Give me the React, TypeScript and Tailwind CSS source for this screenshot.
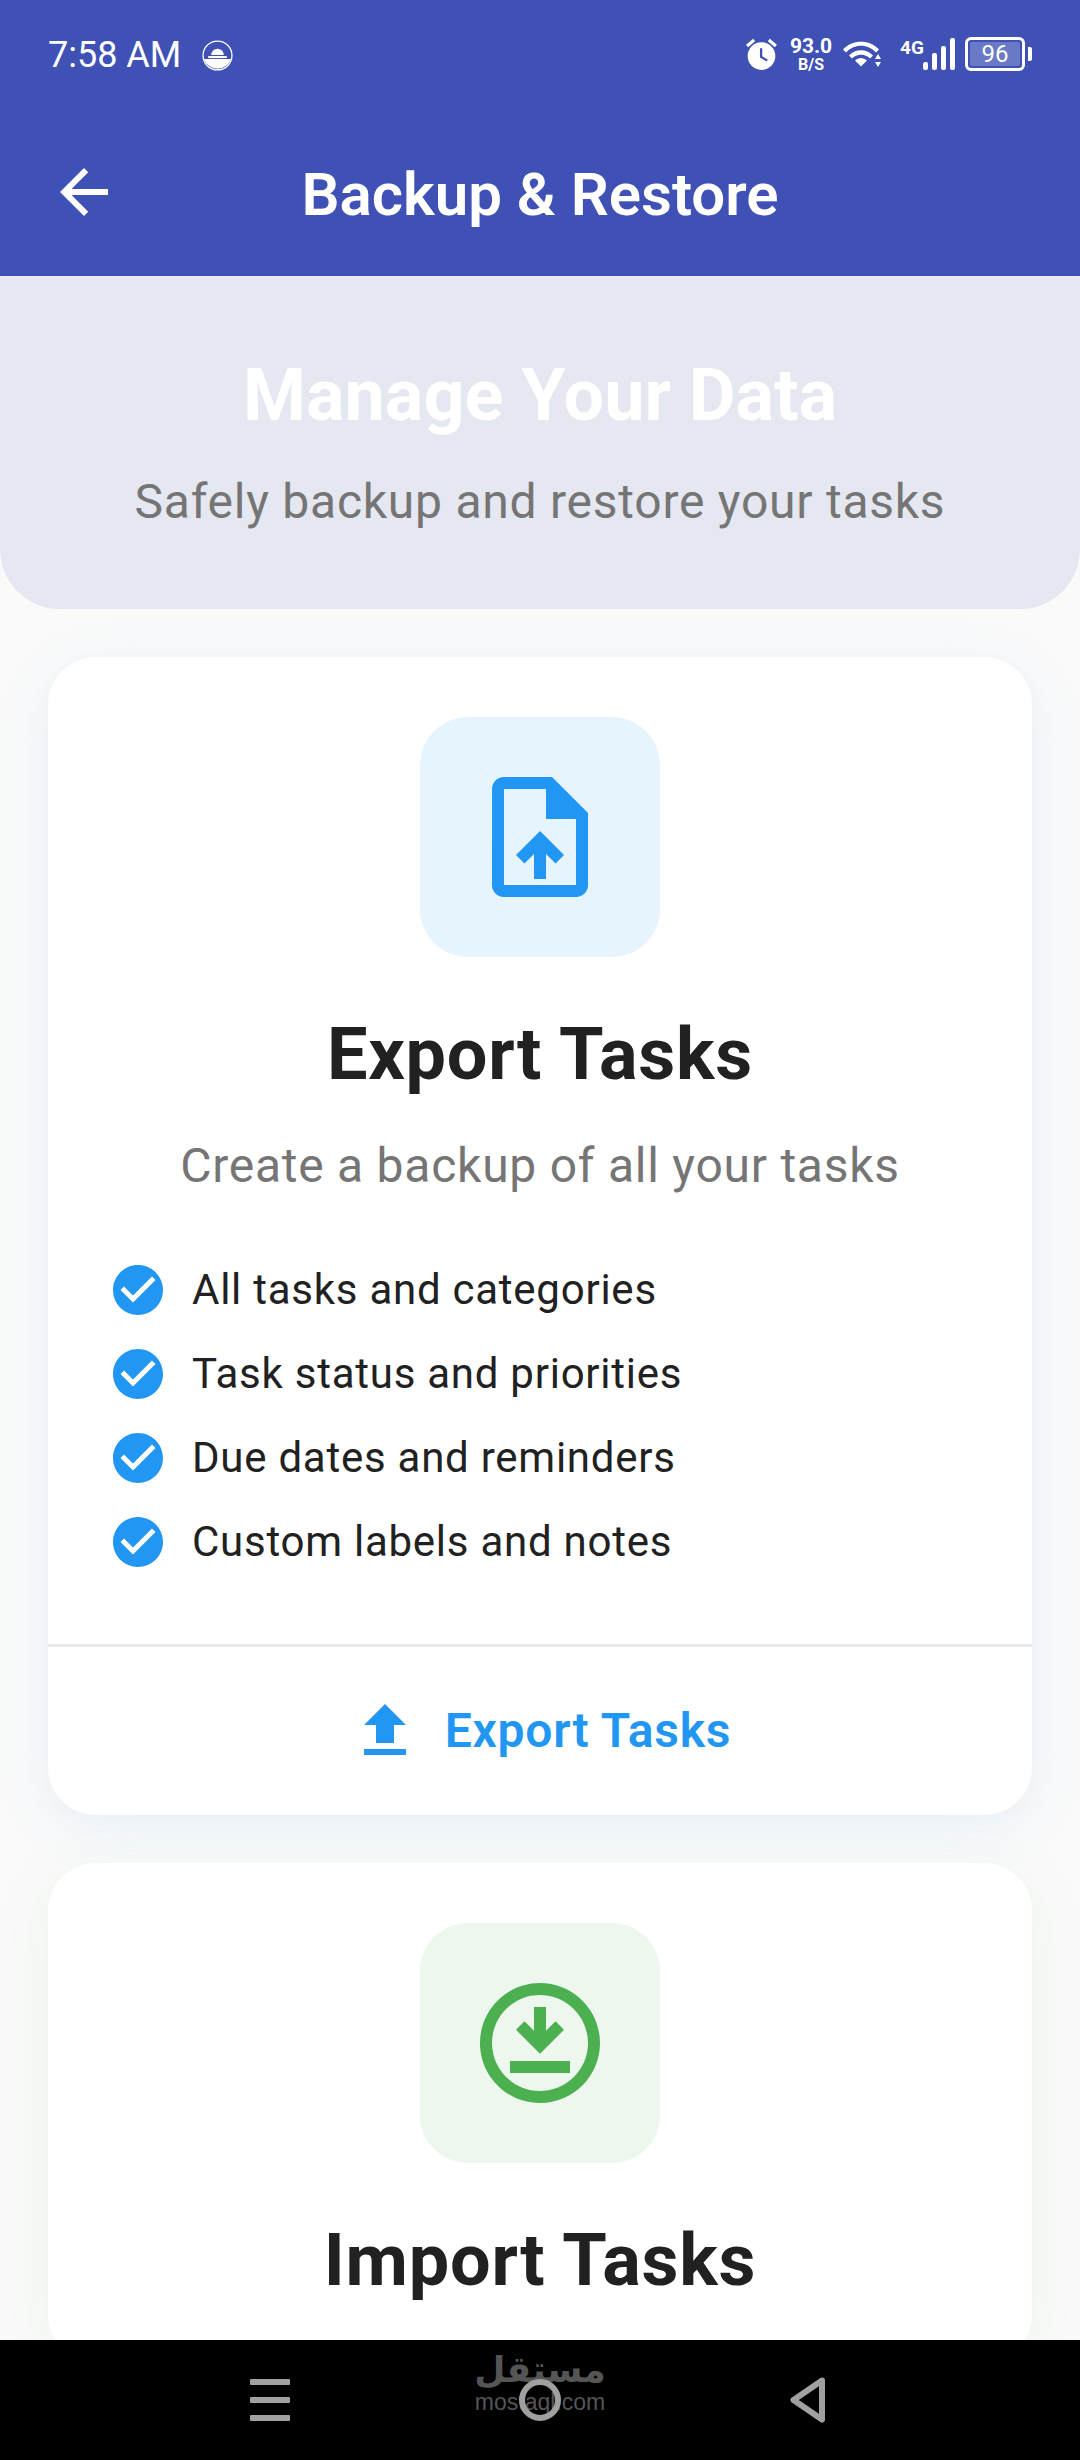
import React from 'react';

const BLUE = '#2196F3';
const GREEN = '#4CAF50';

const features = [
  'All tasks and categories',
  'Task status and priorities',
  'Due dates and reminders',
  'Custom labels and notes',
];

function MdIcon({ d, size, color }: { d: string; size: number; color: string }) {
  return (
    <svg width={size} height={size} viewBox="0 0 24 24" fill={color} className="shrink-0">
      <path d={d} />
    </svg>
  );
}

function StatusBar() {
  return (
    <div className="flex h-[84px] shrink-0 items-center justify-between px-[48px] pt-[24px] text-white">
      <div className="flex items-center gap-[21px]">
        <span className="mt-[2px] text-[36px] leading-[42px] font-normal">7:58 AM</span>
        {/* dome icon */}
        <svg width="31" height="31" viewBox="0 0 30 30" className="mt-[2px] shrink-0">
          <circle cx="15" cy="15" r="14" fill="none" stroke="#fff" strokeWidth="1.2" />
          <path d="M9 14.500a6 6 0 0 1 12 0z" fill="#fff" />
          <path d="M1.800 18.500h26.400a14 14 0 0 1-26.400 0z" fill="#fff" />
          <rect x="6" y="15.500" width="18" height="2" fill="#fff" />
        </svg>
      </div>
      <div className="flex items-center">
        <svg width="37" height="37" viewBox="0 0 24 24" fill="#fff" className="mr-[10px]">
          <path d="M22 5.720l-4.600-3.860-1.290 1.530 4.600 3.860L22 5.720zM7.880 3.390L6.600 1.860 2 5.710l1.290 1.530 4.590-3.850zM12 4c-4.970 0-9 4.030-9 9s4.020 9 9 9c4.970 0 9-4.030 9-9s-4.030-9-9-9z" />
          <path d="M11 8h1.500v5.200l3.600 2.200-.8 1.200L11 14z" fill="#3F51B5" />
        </svg>
        <div className="mr-[11px] flex w-[42px] flex-col items-center font-bold">
          <span className="text-[21px] leading-[21px]">93.0</span>
          <span className="text-[16px] leading-[16px]">B/S</span>
        </div>
        <svg width="38" height="30" viewBox="0 0 38 30" fill="#fff" className="mr-[19px] mt-[2px]">
          <path d="M0 9.500C9-1 27-1 36 9.500l-3 3C25 3.500 11 3.500 3 12.500z" />
          <path d="M6 15.500c6.500-7 17.500-7 24 0l-3 3c-5-5-13-5-18 0z" />
          <path d="M12 20.500c3.500-3.500 8.500-3.500 12 0l-6 6z" />
          <path d="M35 14l3 5h-6zM35 27l-3-5h6z" />
        </svg>
        <span className="mb-[14px] w-[23px] text-[19px] leading-[19px] font-bold">4G</span>
        <div className="mr-[10px] flex h-[32px] items-end gap-[4px]">
          <div className="h-[8px] w-[5px] rounded-[2px] bg-white" />
          <div className="h-[17px] w-[5px] rounded-[2px] bg-white" />
          <div className="h-[24px] w-[5px] rounded-[2px] bg-white" />
          <div className="h-[32px] w-[5px] rounded-[2px] bg-white" />
        </div>
        <div className="flex items-center">
          <div className="flex h-[34px] w-[60px] rounded-[6px] border-[3px] border-white p-[2px]">
            <div className="flex flex-1 items-center justify-center rounded-[2px] bg-[#6a79c6] text-[24px] leading-none">
              96
            </div>
          </div>
          <div className="ml-[3px] h-[14px] w-[4px] rounded-r-[2px] bg-white" />
        </div>
      </div>
    </div>
  );
}

function AppBar() {
  return (
    <header className="shrink-0 bg-[#3F51B5]">
      <StatusBar />
      <div className="relative flex h-[192px] items-start justify-center pt-[76px]">
        <div className="absolute left-[48px] top-[72px]">
          <MdIcon
            size={72}
            color="#fff"
            d="M20 11H7.830l5.590-5.590L12 4l-8 8 8 8 1.410-1.410L7.830 13H20v-2z"
          />
        </div>
        <h1 className="text-[60px] leading-[70px] font-semibold text-white">Backup &amp; Restore</h1>
      </div>
    </header>
  );
}

function FeatureRow({ text, color }: { text: string; color: string }) {
  return (
    <li className="flex h-[60px] items-center gap-[24px]">
      <MdIcon
        size={60}
        color={color}
        d="M12 2C6.480 2 2 6.480 2 12s4.480 10 10 10 10-4.480 10-10S17.520 2 12 2zm-2 15l-5-5 1.410-1.410L10 14.170l7.590-7.590L19 8l-9 9z"
      />
      <span className="text-[42px] leading-[50px] tracking-[0.75px] text-[#212121]">{text}</span>
    </li>
  );
}

function ExportCard() {
  return (
    <section className="overflow-hidden rounded-[48px] bg-white shadow-[0_12px_60px_rgba(33,150,243,0.08),0_4px_20px_rgba(0,0,0,0.02)]">
      <div className="flex flex-col items-center pt-[60px]">
        <div className="flex h-[240px] w-[240px] items-center justify-center rounded-[48px] bg-[#E6F4FE]">
          <MdIcon
            size={144}
            color={BLUE}
            d="M14 2H6c-1.100 0-1.990.9-1.990 2L4 20c0 1.100.89 2 1.990 2H18c1.100 0 2-.9 2-2V8l-6-6zm4 18H6V4h7v5h5v11zM8 15.010l1.410 1.410L11 14.840V19h2v-4.160l1.590 1.590L16 15.010 12.010 11 8 15.010z"
          />
        </div>
        <h2 className="mt-[56px] text-[72px] leading-[84px] font-bold tracking-[0.75px] text-[#212121]">Export Tasks</h2>
        <p className="mt-[41px] text-[48px] leading-[56px] tracking-[0.75px] text-[#757575]">
          Create a backup of all your tasks
        </p>
        <ul className="mt-[66px] flex w-full flex-col gap-[24px] px-[60px]">
          {features.map((f) => (
            <FeatureRow key={f} text={f} color={BLUE} />
          ))}
        </ul>
      </div>
      <div className="mt-[72px] flex h-[171px] items-center justify-center gap-[24px] border-t-[3px] border-[#E9EAEC]">
        <MdIcon size={72} color={BLUE} d="M9 16h6v-6h4l-7-7-7 7h4v6zm-4 2h14v2H5v-2z" />
        <span className="text-[48px] leading-[56px] font-semibold tracking-[0.75px] text-[#2196F3]">Export Tasks</span>
      </div>
    </section>
  );
}

function ImportCard() {
  return (
    <section className="rounded-[48px] bg-white pb-[60px] shadow-[0_12px_60px_rgba(76,175,80,0.08)]">
      <div className="flex flex-col items-center pt-[60px]">
        <div className="flex h-[240px] w-[240px] items-center justify-center rounded-[48px] bg-[#EDF7ED]">
          <MdIcon
            size={144}
            color={GREEN}
            d="M12 4c4.410 0 8 3.590 8 8s-3.590 8-8 8-8-3.590-8-8 3.590-8 8-8m0-2C6.480 2 2 6.480 2 12s4.480 10 10 10 10-4.480 10-10S17.520 2 12 2zm0 11.800l4-4-1.410-1.410L13 9.970V6h-2v3.970L9.410 8.390 8 9.800l4 4zM7 15h10v2H7z"
          />
        </div>
        <h2 className="mt-[56px] text-[72px] leading-[84px] font-bold tracking-[0.75px] text-[#212121]">Import Tasks</h2>
      </div>
    </section>
  );
}

function NavBar() {
  return (
    <nav className="relative flex h-[120px] shrink-0 bg-black">
      {/* watermark sits under the home ring */}
      <div className="absolute left-[475px] top-[10px] flex w-[130px] flex-col items-center text-[#555]">
        <span className="font-['DejaVu_Sans',sans-serif] text-[36px] leading-[40px] font-bold" dir="rtl">
          مستقل
        </span>
        <span className="font-['Liberation_Sans',sans-serif] text-[23px] leading-[24px]">mostaql.com</span>
      </div>
      <div className="absolute left-[250px] top-[39px] flex h-[42px] w-[40px] flex-col justify-between">
        <div className="h-[6px] rounded-[1px] bg-[#a0a0a0]" />
        <div className="h-[6px] rounded-[1px] bg-[#a0a0a0]" />
        <div className="h-[6px] rounded-[1px] bg-[#a0a0a0]" />
      </div>
      <div className="absolute left-[519px] top-[39px] h-[42px] w-[42px] rounded-full border-[6px] border-[#a0a0a0]" />
      <svg width="36" height="46" viewBox="0 0 36 46" className="absolute left-[790px] top-[37px]">
        <path d="M32 3.500L3.500 23 32 42.500z" fill="none" stroke="#a0a0a0" strokeWidth="6" strokeLinejoin="round" />
      </svg>
    </nav>
  );
}

export default function App() {
  return (
    <div className="flex h-[2460px] w-[1080px] flex-col overflow-hidden bg-[#FAFAFA] font-['Roboto',sans-serif]">
      <AppBar />
      <main className="min-h-0 flex-1 overflow-hidden">
        <div className="flex h-[333px] flex-col items-center rounded-b-[60px] bg-[#E5E7F1] pt-[78px]">
          <h2 className="text-[72px] leading-[84px] font-bold text-white">Manage Your Data</h2>
          <p className="mt-[36px] text-[48px] leading-[56px] tracking-[0.75px] text-[#757575]">
            Safely backup and restore your tasks
          </p>
        </div>
        <div className="flex flex-col gap-[48px] px-[48px] pt-[48px]">
          <ExportCard />
          <ImportCard />
        </div>
      </main>
      <NavBar />
    </div>
  );
}
